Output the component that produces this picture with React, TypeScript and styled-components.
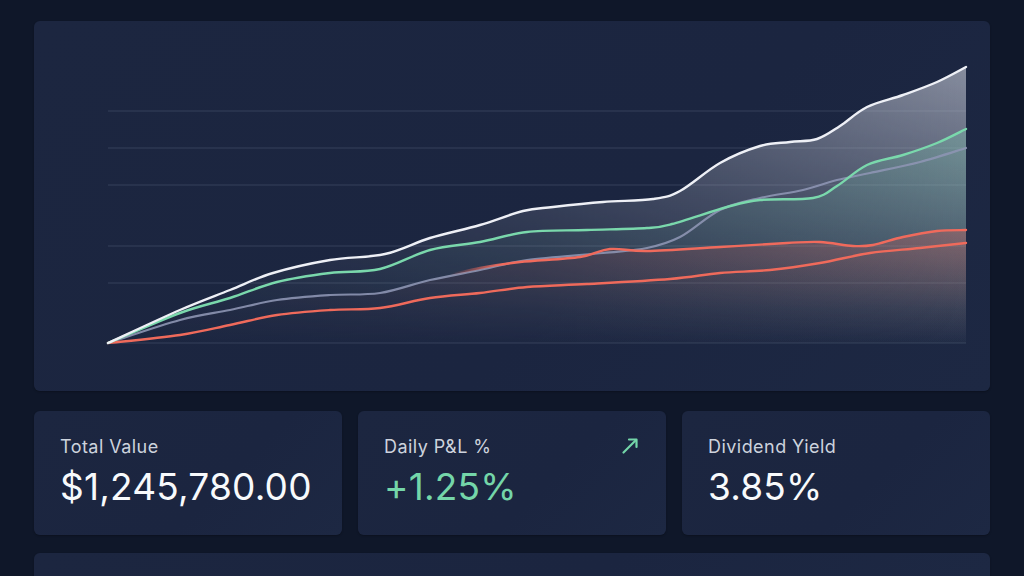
import React from 'react';
import styled, { createGlobalStyle } from 'styled-components';

const GlobalStyle = createGlobalStyle`
    html, body {
        margin: 0;
        padding: 0;
        background: #0f1729;
        font-family: Inter, "Noto Sans", "Liberation Sans", sans-serif;
        overflow: hidden;
    }
`;

const Page = styled.div`
    display: flex;
    flex-direction: column;
    gap: 18px;
    padding: 21px 34px 0;
    height: 576px;
    box-sizing: border-box;
    background: #0f1729;
`;

const Card = styled.div`
    background: linear-gradient(135deg, #1c2640 0%, #1b2540 60%, #1d2843 100%);
    border-radius: 6px;
    box-shadow: 0 1px 2px rgba(0, 0, 0, 0.25);
`;

const ChartCard = styled(Card)`
    height: 370px;
    flex-shrink: 0;
    margin-bottom: 2px;
    overflow: hidden;
    svg {
        display: block;
    }
`;

const StatsRow = styled.div`
    display: grid;
    grid-template-columns: 1fr 1fr 1fr;
    gap: 16px;
    flex-shrink: 0;
`;

const StatCard = styled(Card)`
    height: 124px;
    box-sizing: border-box;
    padding: 26px 27px 0 26px;
    display: flex;
    flex-direction: column;
`;

const StatHeader = styled.div`
    display: flex;
    justify-content: space-between;
    align-items: flex-start;
`;

const Label = styled.div`
    font-size: 18px;
    line-height: 20px;
    color: #cdd3dd;
    letter-spacing: 0.45px;
`;

const Value = styled.div<{ $tone?: 'up' }>`
    margin-top: 8px;
    font-size: 37px;
    line-height: 44px;
    color: ${p => (p.$tone === 'up' ? '#74d6a9' : '#f8fafc')};
    letter-spacing: 0.2px;
`;

const BottomCard = styled(Card)`
    flex: 1;
    border-radius: 6px 6px 0 0;
`;

type Pt = [number, number];

// catmull-rom -> cubic bezier
function smooth(pts: Pt[]) {
    let d = `M${pts[0][0]},${pts[0][1]}`;
    for (let i = 0; i < pts.length - 1; i++) {
        const p0 = pts[i - 1] || pts[i];
        const p1 = pts[i];
        const p2 = pts[i + 1];
        const p3 = pts[i + 2] || p2;
        const c1x = p1[0] + (p2[0] - p0[0]) / 6;
        const c1y = p1[1] + (p2[1] - p0[1]) / 6;
        const c2x = p2[0] - (p3[0] - p1[0]) / 6;
        const c2y = p2[1] - (p3[1] - p1[1]) / 6;
        d += ` C${c1x.toFixed(1)},${c1y.toFixed(1)} ${c2x.toFixed(1)},${c2y.toFixed(1)} ${p2[0]},${p2[1]}`;
    }
    return d;
}

const area = (pts: Pt[]) => `${smooth(pts)} L966,343 L108,343 Z`;

const whitePts: Pt[] = [
    [108, 343], [180, 310], [230, 290], [273, 273], [330, 260], [385, 254],
    [430, 238], [480, 225], [523, 211], [553, 207], [603, 202], [653, 199],
    [680, 191], [720, 163], [760, 146], [790, 142], [817, 139], [840, 126],
    [867, 107], [903, 95], [937, 82], [966, 67],
];

const greenPts: Pt[] = [
    [108, 343], [180, 313], [230, 298], [277, 282], [330, 273], [380, 269],
    [430, 250], [480, 242], [527, 232], [587, 230], [647, 228], [672, 224],
    [727, 207], [760, 200], [813, 198], [837, 186], [867, 165], [903, 155],
    [937, 143], [966, 129],
];

const slatePts: Pt[] = [
    [108, 343], [180, 320], [230, 310], [277, 300], [330, 295], [380, 293],
    [430, 280], [480, 270], [527, 260], [603, 253], [647, 248], [680, 237],
    [720, 210], [760, 198], [803, 190], [837, 180], [870, 173], [920, 162],
    [966, 148],
];

const redUpPts: Pt[] = [
    [108, 343], [180, 320], [230, 310], [277, 300], [330, 295], [380, 293],
    [430, 280], [480, 268], [520, 262], [580, 257], [610, 249], [647, 251],
    [720, 247], [787, 243], [820, 242], [853, 246], [873, 245], [903, 237],
    [937, 231], [966, 230],
];

const redLowPts: Pt[] = [
    [108, 343], [180, 335], [230, 325], [277, 315], [330, 310], [380, 308],
    [430, 298], [480, 293], [527, 287], [587, 284], [670, 279], [720, 273],
    [770, 270], [820, 263], [870, 253], [920, 248], [966, 243],
];

const gridYs = [111, 148, 185, 246, 283];

function PerformanceChart() {
    return (
        <svg width="956" height="370" viewBox="34 21 956 370">
            <defs>
                <linearGradient id="fadeX" x1="108" x2="966" y1="0" y2="0" gradientUnits="userSpaceOnUse">
                    <stop offset="0" stopColor="#fff" stopOpacity="0.15" />
                    <stop offset="0.5" stopColor="#fff" stopOpacity="0.45" />
                    <stop offset="1" stopColor="#fff" stopOpacity="1" />
                </linearGradient>
                <mask id="fadeMask" maskUnits="userSpaceOnUse" x="34" y="21" width="956" height="370">
                    <rect x="34" y="21" width="956" height="370" fill="url(#fadeX)" />
                </mask>
                <linearGradient id="whiteFill" x1="0" x2="0" y1="67" y2="343" gradientUnits="userSpaceOnUse">
                    <stop offset="0" stopColor="#c8ccd8" stopOpacity="0.62" />
                    <stop offset="1" stopColor="#c8ccd8" stopOpacity="0.03" />
                </linearGradient>
                <linearGradient id="greenFill" x1="0" x2="0" y1="129" y2="343" gradientUnits="userSpaceOnUse">
                    <stop offset="0" stopColor="#7fd3b6" stopOpacity="0.3" />
                    <stop offset="1" stopColor="#7fd3b6" stopOpacity="0.0" />
                </linearGradient>
                <linearGradient id="redFill" x1="0" x2="0" y1="230" y2="343" gradientUnits="userSpaceOnUse">
                    <stop offset="0" stopColor="#e8645a" stopOpacity="0.32" />
                    <stop offset="0.7" stopColor="#e8645a" stopOpacity="0.05" />
                    <stop offset="1" stopColor="#e8645a" stopOpacity="0.0" />
                </linearGradient>
                <linearGradient id="redStroke" x1="108" x2="966" y1="0" y2="0" gradientUnits="userSpaceOnUse">
                    <stop offset="0" stopColor="#f06a5c" stopOpacity="0" />
                    <stop offset="0.4" stopColor="#f06a5c" stopOpacity="0" />
                    <stop offset="0.46" stopColor="#f06a5c" stopOpacity="1" />
                    <stop offset="1" stopColor="#f06a5c" stopOpacity="1" />
                </linearGradient>
            </defs>

            {gridYs.map(y => (
                <line key={y} x1="108" x2="966" y1={y} y2={y} stroke="#94a3b8" strokeOpacity="0.22" strokeWidth="1" />
            ))}
            <line x1="108" x2="966" y1="343" y2="343" stroke="#94a3b8" strokeOpacity="0.22" strokeWidth="1" />

            <g mask="url(#fadeMask)">
                <path d={area(whitePts)} fill="url(#whiteFill)" />
                <path d={area(greenPts)} fill="url(#greenFill)" />
                <path d={area(redUpPts)} fill="url(#redFill)" />
            </g>

            <path d={smooth(slatePts)} fill="none" stroke="#8d95b3" strokeWidth="2.2" strokeLinecap="round" strokeOpacity="0.9" />
            <path d={smooth(redLowPts)} fill="none" stroke="#ef6a5b" strokeWidth="2.4" strokeLinecap="round" />
            <path d={smooth(redUpPts)} fill="none" stroke="url(#redStroke)" strokeWidth="2.4" strokeLinecap="round" />
            <path d={smooth(greenPts)} fill="none" stroke="#7ad8ac" strokeWidth="2.4" strokeLinecap="round" />
            <path d={smooth(whitePts)} fill="none" stroke="#eef0f6" strokeWidth="2.4" strokeLinecap="round" />
        </svg>
    );
}

const TrendArrow = () => (
    <svg width="18" height="18" viewBox="0 0 18 18" fill="none" stroke="#74d6a9" strokeWidth="2.2" strokeLinecap="round" strokeLinejoin="round">
        <path d="M2.5 15.5 L15 3" />
        <path d="M8 2.5 H15.5 V10" />
    </svg>
);

export default function App() {
    return (
        <>
            <GlobalStyle />
            <Page>
                <ChartCard>
                    <PerformanceChart />
                </ChartCard>

                <StatsRow>
                    <StatCard>
                        <Label>Total Value</Label>
                        <Value>$1,245,780.00</Value>
                    </StatCard>
                    <StatCard>
                        <StatHeader>
                            <Label>Daily P&amp;L %</Label>
                            <TrendArrow />
                        </StatHeader>
                        <Value $tone="up">+1.25%</Value>
                    </StatCard>
                    <StatCard>
                        <Label>Dividend Yield</Label>
                        <Value>3.85%</Value>
                    </StatCard>
                </StatsRow>

                <BottomCard />
            </Page>
        </>
    );
}
